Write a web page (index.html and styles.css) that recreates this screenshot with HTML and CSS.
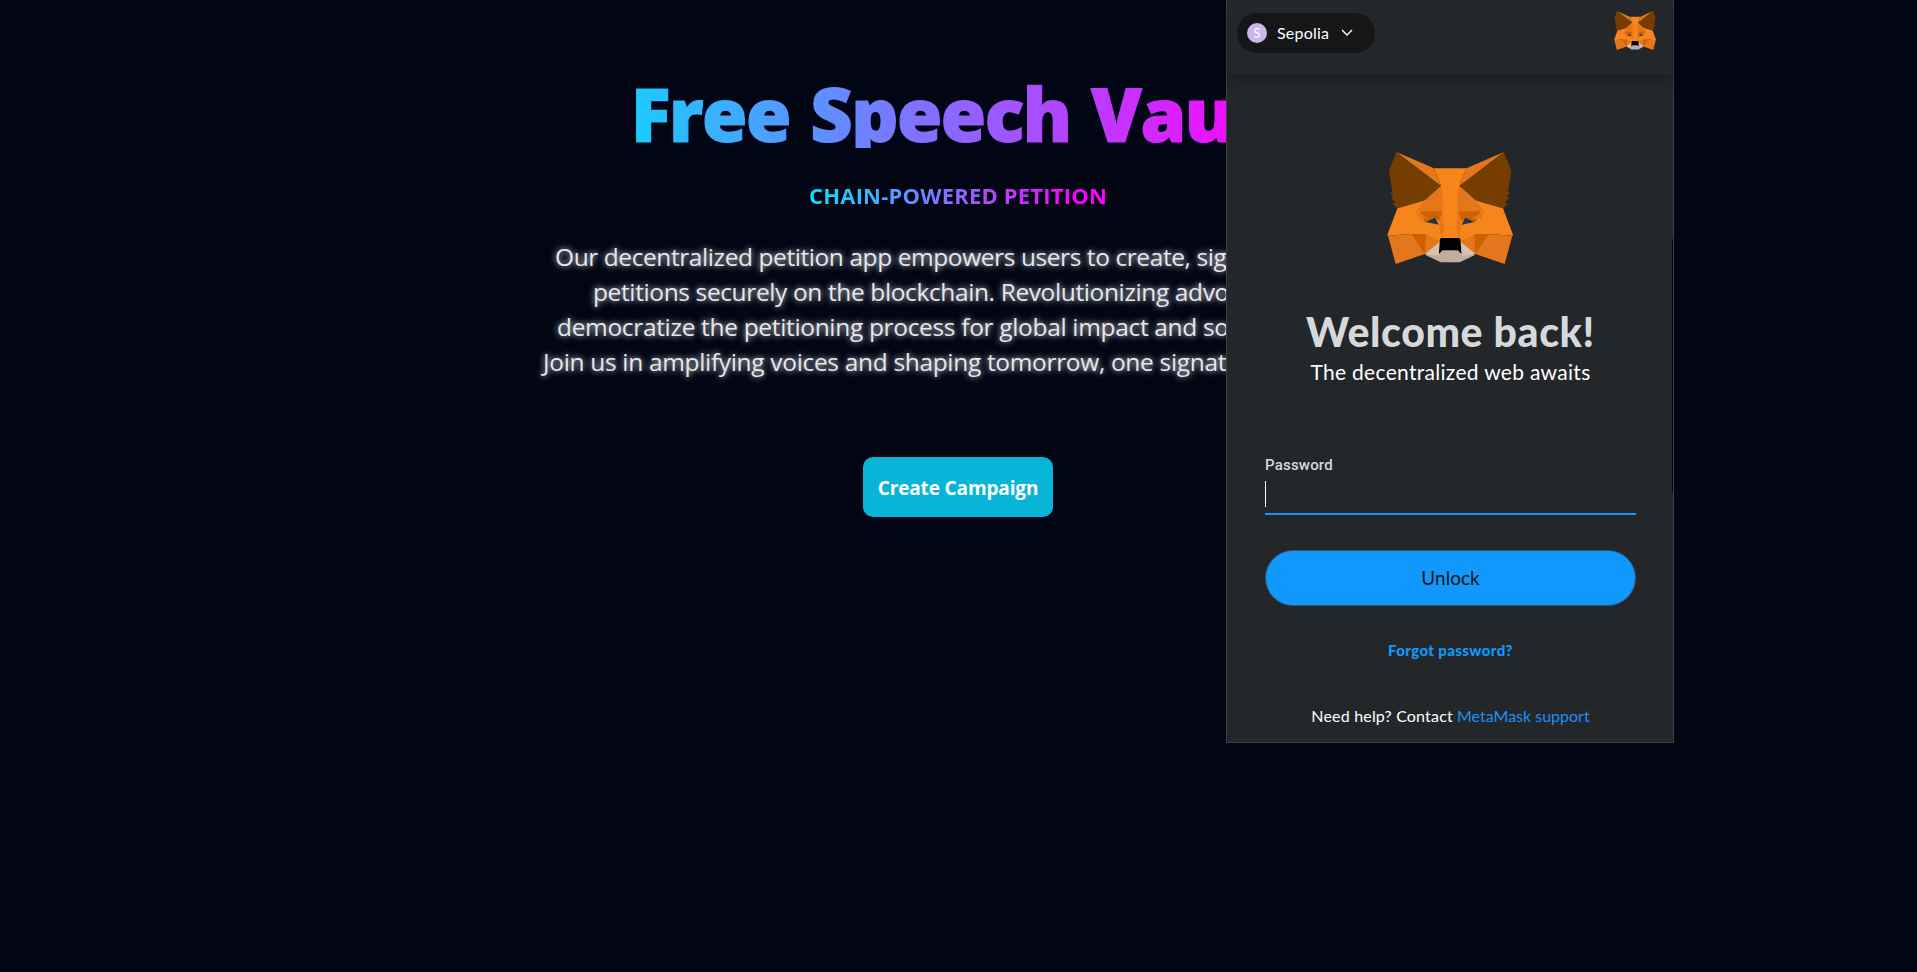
FILE: index.html
```html
<!DOCTYPE html>
<html lang="en"><head><meta charset="utf-8"><title>Free Speech Vault</title>
<link rel="stylesheet" href="styles.css"></head>
<body>
<main class="hero">
  <h1 class="hero-title">Free Speech Vault</h1>
  <p class="hero-subtitle">CHAIN-POWERED PETITION</p>
  <div class="hero-text">
    <p class="l1">Our decentralized petition app empowers users to create, sign, and</p>
    <p class="l2">petitions securely on the blockchain. Revolutionizing advocacy,</p>
    <p class="l3">democratize the petitioning process for global impact and social</p>
    <p class="l4">Join us in amplifying voices and shaping tomorrow, one signature</p>
  </div>
  <button class="hero-button">Create Campaign</button>
</main>
<aside class="wallet">
  <header class="wallet-header">
    <div class="network"><span class="network-badge">S</span><span class="network-name">Sepolia</span>
      <svg class="chevron" viewBox="0 0 12 8"><path d="M1 1l5 5 5-5"/></svg></div>
    <svg class="fox-small" viewBox="52 50 376 337" preserveAspectRatio="none"><use href="#fox"/></svg>
  </header>
  <section class="wallet-body">
    <svg class="fox-large" viewBox="52 50 376 337" preserveAspectRatio="none">
      <defs>
        <g id="fox-half">
          <path fill="#f6851b" d="M192 99H241V350H207L165 357 125 297 52 302 83 219 165 195 213 152z"/>
          <path fill="#e4761b" d="M80 50L192 99 213 152z"/>
          <path fill="#763d00" d="M80 50L213 152 165 195 83 219 68 205 77 201 65 188 71 182 62 174 68 167 58 107z"/>
          <path fill="#e4761b" d="M213 152L165 195 138 228H217L220 195zM217 228L207 268 214 309 222 280zM55 302L125 297 168 297 210 320 165 357 78 387z"/>
          <path fill="#cd6100" d="M150 228H217L207 258 196 247 165 262zM125 297H168L165 357z"/>
          <path fill="#e4761b" d="M138 228L150 252 178 249z"/>
          <path fill="#233447" d="M168 261L196 247 206 269z"/>
          <path fill="#d7c1b3" d="M165 357L210 320 207 356 212 363H180z"/>
          <path fill="#c0ad9e" d="M165 359L207 362 207 354 218 345H241V382H212z"/>
          <path fill="#000" d="M214 309H241V346H218L207 356 210 312z"/>
        </g>
        <g id="fox"><use href="#fox-half"/><use href="#fox-half" transform="matrix(-1 0 0 1 481 0)"/></g>
      </defs>
      <use href="#fox"/>
    </svg>
    <h2 class="welcome">Welcome back!</h2>
    <p class="tagline">The decentralized web awaits</p>
    <div class="field"><label class="field-label">Password</label><div class="field-input"><i class="caret"></i></div></div>
    <button class="unlock">Unlock</button>
    <a class="forgot">Forgot password?</a>
    <p class="help"><span>Need help? Contact</span> <a>MetaMask support</a></p>
  </section>
  <i class="scroll-thumb"></i>
</aside>
</body></html>
```
FILE: styles.css
```css
* { box-sizing: border-box; }
body { margin: 0; height: 972px; overflow: hidden; background: #020514; color: #fff; }
h1, h2, p { margin: 0; }
button { border: 0; padding: 0; }
.hero { display: flex; flex-direction: column; align-items: flex-start; padding-top: 72px; font-family: "Open Sans", "Noto Sans", sans-serif; white-space: nowrap; }
.hero-title { margin-left: 553px; padding-left: 78px; width: 728px; height: 76px; font-size: 73.5px; line-height: 84px; font-weight: 800; letter-spacing: -1.55px; word-spacing: 3px; color: transparent; -webkit-text-stroke: 1.2px transparent; background: linear-gradient(90deg, #00e3ff, #f0f); -webkit-background-clip: text; background-clip: text; }
.hero-subtitle { margin: 32px 0 0 809px; width: 300px; font-size: 22px; line-height: 30px; font-weight: 700; letter-spacing: 0.2px; color: transparent; background: linear-gradient(90deg, #00e8ff, #f0f 265px); -webkit-background-clip: text; background-clip: text; }
.hero-text { margin-top: 29px; font-size: 24.5px; line-height: 35px; letter-spacing: -0.33px; color: #e5e7eb; text-shadow: 0 0 6px #e5e7eb; }
.l1 { padding-left: 555px; letter-spacing: -0.42px; }
.l2 { padding-left: 593px; letter-spacing: -0.38px; }
.l3 { padding-left: 557px; }
.l4 { padding-left: 543px; }
.hero-button { margin: 78px 0 0 863px; padding-top: 2px; width: 190px; height: 60px; border-radius: 10px; background: #08b5d7; color: #fff; font: 700 19px "Open Sans", sans-serif; letter-spacing: -0.13px; }
.wallet { position: absolute; left: 1226px; top: 0; width: 448px; height: 743px; border: 1px solid #3d4043; border-top: 0; background: #24272a; font-family: Lato, sans-serif; white-space: nowrap; }
.wallet-header { display: flex; justify-content: space-between; height: 75px; padding: 13px 17px 0 10px; box-shadow: 0 4px 14px rgba(0,0,0,.3); }
.network { display: flex; align-items: center; width: 138px; height: 40px; padding-left: 10px; border-radius: 20px; background: #141618; font-size: 16px; }
.network-badge { width: 20px; height: 20px; margin-right: 10px; border-radius: 50%; background: #cfb5f0; font-size: 13px; line-height: 20px; text-align: center; }
.network-name { padding-bottom: 2px; letter-spacing: 0.2px; }
.chevron { width: 12px; height: 8px; margin-left: 12px; fill: none; stroke: #fff; stroke-width: 1.4; }
.fox-small { width: 42px; height: 39px; margin-top: -2px; }
.wallet-body { display: flex; flex-direction: column; align-items: center; padding: 77px 37px 0 38px; }
.fox-large { width: 126px; height: 112px; margin-right: 2px; }
.welcome { margin-top: 44px; font-size: 41px; line-height: 48px; font-weight: 900; letter-spacing: 0.6px; color: #d6d9dc; }
.tagline { margin-top: 2px; font-size: 21px; line-height: 28px; letter-spacing: 0.3px; }
.field { width: 371px; margin-top: 69px; border-bottom: 2px solid #1098fc; }
.field-label { display: block; font: 500 15px/20px Roboto, sans-serif; letter-spacing: 0.2px; color: #d6d9dc; }
.field-input { height: 38px; padding-top: 6px; }
.caret { display: block; width: 1px; height: 26px; background: #fff; }
.unlock { width: 371px; height: 56px; margin-top: 35px; padding-bottom: 2px; border: 1px solid #35536c; border-radius: 28px; background: #1098fc; color: #141618; font: 400 19px Lato, sans-serif; }
.forgot { margin-top: 33px; font-size: 15px; line-height: 22px; font-weight: 900; letter-spacing: 0.38px; color: #1098fc; }
.help { margin-top: 44px; font-size: 16px; line-height: 22px; }
.help span { letter-spacing: 0.18px; }
.help a { color: #1e90f5; }
.scroll-thumb { position: absolute; right: 0; top: 239px; width: 1px; height: 254px; background: #020514; }
```
